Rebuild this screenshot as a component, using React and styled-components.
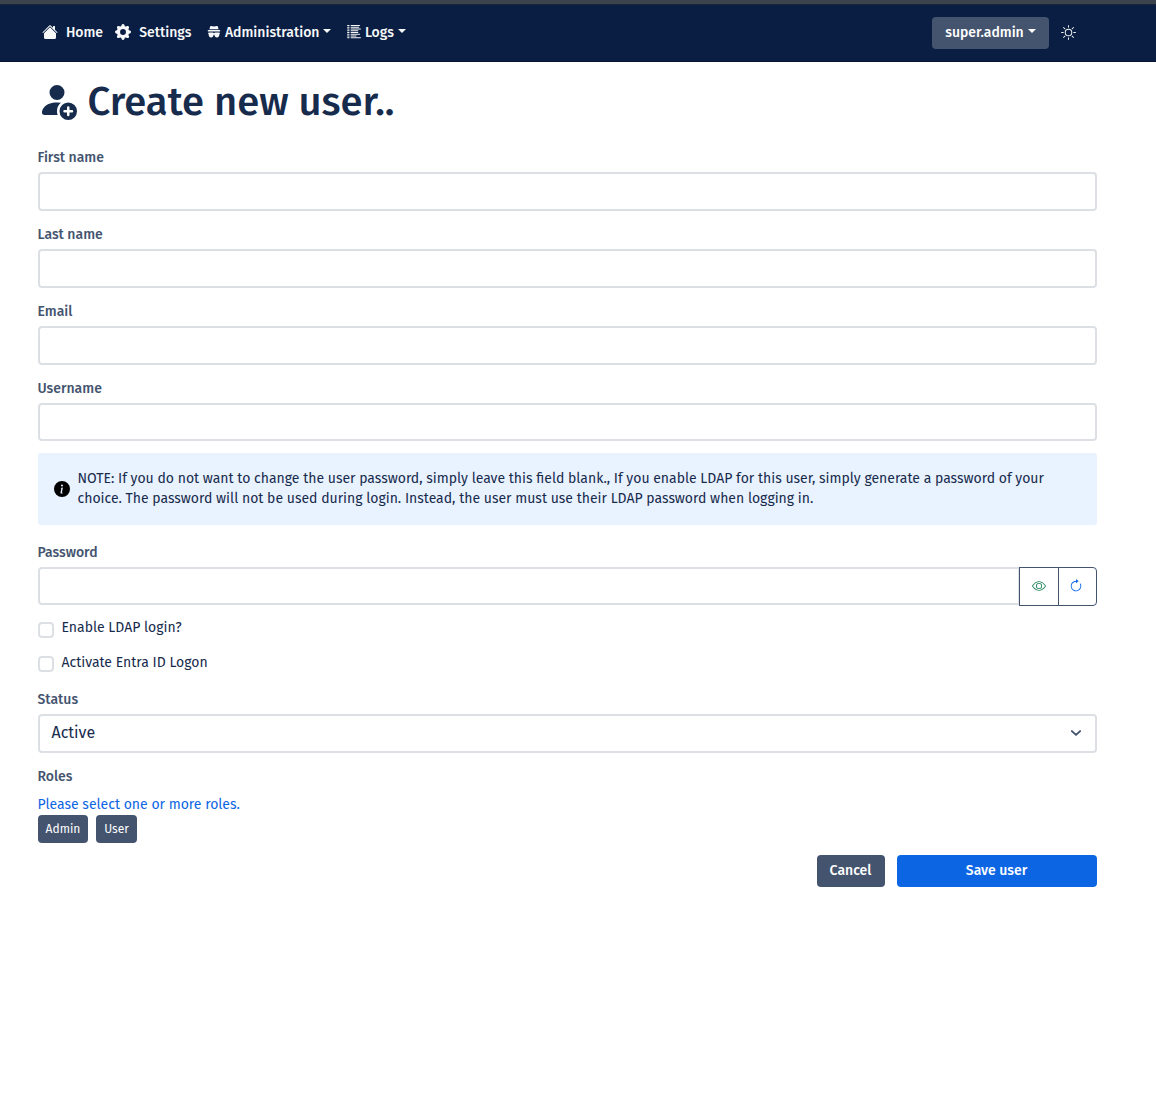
import React from "react";
import styled, { createGlobalStyle } from "styled-components";
import {
  BsHouseFill,
  BsGearFill,
  BsListColumnsReverse,
  BsSun,
  BsEye,
  BsArrowClockwise,
  BsPersonFillAdd,
  BsInfoCircleFill,
} from "react-icons/bs";

const GlobalStyle = createGlobalStyle`
  *, *::before, *::after { box-sizing: border-box; }
  body {
    margin: 0;
    background: #fff;
    color: #172b4d;
    font-family: "Fira Sans", "Noto Sans", sans-serif;
    font-size: 14px;
    line-height: 20px;
  }
  button, input { font: inherit; letter-spacing: inherit; }
  svg { display: block; flex: none; }
`;

const Navbar = styled.nav`
  display: flex;
  align-items: center;
  height: 62px;
  padding: 1px 80px 0 41.5px;
  border-top: 4px solid #3b434f;
  border-bottom: 1px solid #07142f;
  box-shadow: inset 0 1px 0 #1b2536;
  background: #091e42;
  color: #f7f8f9;
  font-weight: 500;

  svg { margin-bottom: 2px; }
`;

const NavLink = styled.a`
  display: flex;
  align-items: center;
  height: 32px;
  gap: ${(p) => p.$gap}px;
  margin-right: ${(p) => p.$after}px;
  padding-bottom: 1px;
  white-space: nowrap;

  svg { margin-bottom: 1px; }
`;

const Caret = styled.span`
  width: 8px;
  margin: 0 0 3px ${(p) => p.$left || 0}px;
  border-top: 4px solid currentColor;
  border-left: 4px solid transparent;
  border-right: 4px solid transparent;
`;

const AccountButton = styled.button`
  display: flex;
  align-items: center;
  justify-content: center;
  width: 117px;
  height: 32px;
  margin: 0 12px 0 auto;
  padding: 0 0 1px;
  border: 0;
  border-radius: 4px;
  background: #44546f;
  color: #fff;
  font-weight: 500;
`;

const Page = styled.main`
  padding: 18px 59.5px 0 37.5px;
`;

const Title = styled.h1`
  display: flex;
  gap: 10.5px;
  height: 44px;
  margin: 0 0 24px -0.5px;
  font-size: 40px;
  font-weight: 500;
  line-height: 44px;
`;

const Field = styled.div`
  height: 62.8px;
  margin-bottom: ${(p) => p.$after ?? 14.1}px;
`;

const Label = styled.label`
  display: block;
  height: 20px;
  margin-bottom: 4.3px;
  color: #44546f;
  font-weight: 500;
`;

const TextInput = styled.input`
  display: block;
  flex: 1;
  width: 100%;
  min-width: 0;
  height: 38.45px;
  padding: 6px 12px;
  border: 2px solid #dcdfe4;
  border-radius: ${(p) => (p.$joined ? "4px 0 0 4px" : "4px")};
  background: #fff;
  outline: 0;
`;

const InputGroup = styled.div`
  display: flex;
`;

const IconButton = styled.button`
  display: flex;
  align-items: center;
  justify-content: center;
  width: ${(p) => (p.$last ? 39 : 40)}px;
  height: 39px;
  margin-left: -1px;
  padding: 0 ${(p) => (p.$last ? 1.5 : 0)}px 1px 0;
  border: 1px solid #44546f;
  border-radius: ${(p) => (p.$last ? "0 4px 4px 0" : "0")};
  background: #fff;
  color: ${(p) => p.$color};
`;

const Note = styled.div`
  display: flex;
  align-items: center;
  gap: 8px;
  height: 72px;
  margin-bottom: 17.6px;
  padding: 0 16px;
  border-radius: 3px;
  background: #e9f2ff;
`;

const NoteText = styled.p`
  margin: 0;
  line-height: 20px;
`;

const CheckRow = styled.label`
  display: flex;
  align-items: flex-start;
  gap: 8px;
  height: 20px;
  margin-bottom: ${(p) => p.$after}px;
`;

const CheckBox = styled.input`
  appearance: none;
  width: 16px;
  height: 16px;
  margin: ${(p) => p.$top}px 0 0;
  border: 2px solid #dcdfe4;
  border-radius: 4px;
  background: #fff;
`;

const Select = styled.div`
  display: flex;
  align-items: center;
  justify-content: space-between;
  height: 38.4px;
  padding: 0 13px 1px 12px;
  border: 2px solid #dcdfe4;
  border-radius: 4px;
  font-size: 16px;
`;

const Hint = styled.p`
  margin: 0 0 0.4px;
  padding-top: 4px;
  color: #0c66e4;
`;

const Roles = styled.div`
  display: flex;
  gap: 8px;
  margin-bottom: 12px;
`;

const RoleButton = styled.button`
  width: ${(p) => p.$width}px;
  height: 28px;
  padding: 0 0 1px 1px;
  border: 0;
  border-radius: 4px;
  background: #44546f;
  color: #fff;
  font-size: 12px;
`;

const Actions = styled.div`
  display: flex;
  justify-content: flex-end;
  gap: 12px;
`;

const ActionButton = styled.button`
  width: ${(p) => (p.$primary ? 200 : 68)}px;
  height: 32px;
  padding: 0 0 1px;
  border: 0;
  border-radius: 4px;
  background: ${(p) => (p.$primary ? "#0c66e4" : "#44546f")};
  color: #fff;
  font-weight: 500;
`;

function IncognitoIcon() {
  return (
    <svg width="14" height="14" viewBox="0 0 14 14" fill="currentColor">
      <path d="M4.2 1C3.5 1 3.1 1.5 2.9 2.2L2.6 4h8.8l-.3-1.8C10.9 1.5 10.5 1 9.8 1 9 1 8 1.5 7 1.5S5 1 4.2 1Z" />
      <path d="M2.5 4.8 1 5.3C.5 5.5.6 6.3 1.1 6.4h11.800c.5-.1.6-.9.1-1.100l-1.500-.5Z" />
      <path d="M1.200 8.200c0-.4.3-.6.7-.6h3.600c.7 0 1 .6 1.500.6s.8-.6 1.500-.6h3.600c.4 0 .7.2.7.6v.9h-.4c0 2.200-.8 3.500-2.500 3.500-1.500 0-2.200-1.100-2.500-2.800h-.8c-.3 1.700-1 2.800-2.500 2.800-1.700 0-2.500-1.300-2.500-3.500h-.4Z" />
    </svg>
  );
}

export default function App() {
  return (
    <>
      <GlobalStyle />
      <Navbar>
        <NavLink $gap={8.4} $after={11.8}>
          <BsHouseFill size={16} />
          Home
        </NavLink>
        <NavLink $gap={8.4} $after={15.8}>
          <BsGearFill size={16} />
          Settings
        </NavLink>
        <NavLink $gap={3.7} $after={16}>
          <IncognitoIcon />
          Administration
          <Caret />
        </NavLink>
        <NavLink $gap={3.7} $after={0}>
          <BsListColumnsReverse size={14} />
          Logs
          <Caret />
        </NavLink>
        <AccountButton type="button">
          super.admin
          <Caret $left={4} />
        </AccountButton>
        <BsSun size={15} />
      </Navbar>
      <Page>
        <Title>
          <BsPersonFillAdd size={40} />
          Create new user..
        </Title>
        {["First name", "Last name", "Email", "Username"].map((name) => (
          <Field key={name} $after={name === "Username" ? 11.6 : undefined}>
            <Label>{name}</Label>
            <TextInput aria-label={name} />
          </Field>
        ))}
        <Note>
          <BsInfoCircleFill size={16} color="#000" />
          <NoteText>
            NOTE: If you do not want to change the user password, simply leave this field blank., If you enable LDAP for
            this user, simply generate a password of your choice. The password will not be used during login. Instead,
            the user must use their LDAP password when logging in.
          </NoteText>
        </Note>
        <Field $after={12.4}>
          <Label>Password</Label>
          <InputGroup>
            <TextInput type="password" aria-label="Password" $joined />
            <IconButton type="button" aria-label="Show password" $color="#1f845a">
              <BsEye size={14} />
            </IconButton>
            <IconButton type="button" aria-label="Generate password" $color="#0c66e4" $last>
              <BsArrowClockwise size={14} />
            </IconButton>
          </InputGroup>
        </Field>
        <CheckRow $after={15}>
          <CheckBox type="checkbox" $top={4} />
          Enable LDAP login?
        </CheckRow>
        <CheckRow $after={17}>
          <CheckBox type="checkbox" $top={3} />
          Activate Entra ID Logon
        </CheckRow>
        <Field>
          <Label>Status</Label>
          <Select>
            Active
            <svg width="12" height="12" viewBox="0 0 16 16" fill="none" stroke="#44546f" strokeWidth="2.6" strokeLinecap="round" strokeLinejoin="round">
              <path d="m2.5 5.5 5.5 5 5.5-5" />
            </svg>
          </Select>
        </Field>
        <Label>Roles</Label>
        <Hint>Please select one or more roles.</Hint>
        <Roles>
          <RoleButton type="button" $width={50}>Admin</RoleButton>
          <RoleButton type="button" $width={41}>User</RoleButton>
        </Roles>
        <Actions>
          <ActionButton type="button">Cancel</ActionButton>
          <ActionButton type="button" $primary>Save user</ActionButton>
        </Actions>
      </Page>
    </>
  );
}
